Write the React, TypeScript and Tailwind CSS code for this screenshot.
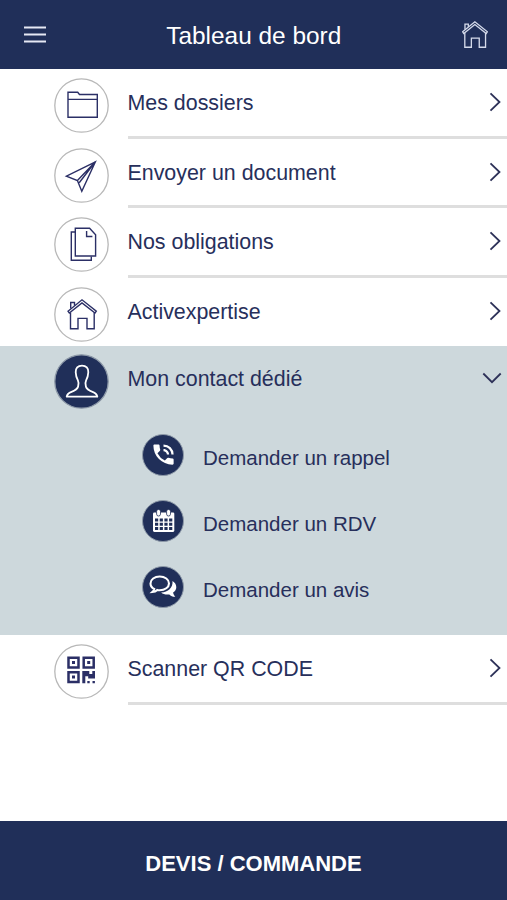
import type { ReactNode } from "react";
import { MdPhoneInTalk } from "react-icons/md";
import { clsx } from "clsx";

const HousePaths = () => (
  <>
    <path d="M14 24.2 28 12.8l14.3 11.4-1.3 1.9L28 15.9 15.3 26.1z" />
    <path d="M16.7 21.6v-6.1h3.8v3" />
    <path d="M16.5 25.5v16.3H24V31.4h9v10.4h7.2V25.5" />
  </>
);

const FolderIcon = () => (
  <path d="M14 39.3v-25h9.7l1.8 2.2h17.8v22.8zM14 21.4h29.3" />
);

const PlaneIcon = () => (
  <path d="M41.4 13.8 12.4 28.2l11 4.3 4.4 10.700zM23.4 32.5l18-18.7L25.2 34.8" />
);

const DocumentsIcon = () => (
  <>
    <path d="M21.3 11.3H35.6l6 6.4V39H21.3z" />
    <path d="M32.6 14v5.5h5.8" />
    <path d="M21.100 15h-3.8v28.3h20V39.5" />
  </>
);

const PersonIcon = () => (
  <path
    strokeWidth="1.8"
    strokeLinejoin="round"
    d="M28 11.6c-4.200 0-6.500 2.700-6.300 6.700.1 3.600 1.100 6 2.200 8.100.7 1.500.9 4.300.2 6.200-.8 2.400-3.400 4-6.600 5.200-2.700 1-4.400 2.100-4.800 4.900h30.600c-.4-2.800-2.100-3.900-4.800-4.900-3.200-1.200-5.800-2.800-6.600-5.200-.7-1.900-.5-4.700.2-6.200 1.100-2.100 2.100-4.500 2.200-8.100.2-4-2.100-6.700-6.300-6.700z"
  />
);

const QrIcon = () => (
  <>
    <path
      strokeWidth="2.5"
      d="M14.5 13.8h10v9.6h-10zM29.700 13.8h10v9.600h-10zM14.5 28.3h10v9.700h-10z"
    />
    <g fill="currentColor" stroke="none">
      <path d="M18 17.100h3v3h-3zM33.200 17.100h3v3h-3zM18 31.600h3v3h-3z" />
      <path d="M28.300 27.100h7v3h3v-3h2.700v7.500h-6.800v-2.300h-2.900v7h-3z" />
      <path d="M33.300 36.900h2.400v2.400h-2.400zM38.500 36.900h2.400v2.400h-2.400z" />
    </g>
  </>
);

const CalendarIcon = () => (
  <svg viewBox="0 0 42 42" className="size-[42px] shrink-0" fill="none">
    <rect x="11" y="12.4" width="21.3" height="19.5" rx="1.3" fill="#fff" />
    <path
      d="M13 18.5h3.200v3H13zM17.700 18.5h3.200v3h-3.200zM22.400 18.5h3.200v3h-3.200zM27.100 18.5h3.200v3h-3.200zM13 22.8h3.200v3H13zM17.700 22.8h3.200v3h-3.200zM22.400 22.8h3.200v3h-3.200zM27.100 22.8h3.200v3h-3.200zM13 27.1h3.200v3H13zM17.700 27.1h3.200v3h-3.200zM22.400 27.1h3.200v3h-3.200zM27.100 27.1h3.200v3h-3.200z"
      fill="#202f59"
    />
    <g fill="#fff" stroke="#202f59" strokeWidth=".8">
      <rect x="14.6" y="9.4" width="3.9" height="6.6" rx="1.9" />
      <rect x="24.6" y="9.4" width="3.9" height="6.6" rx="1.9" />
    </g>
  </svg>
);

const ChatIcon = () => (
  <svg viewBox="0 0 42 42" className="size-[42px] shrink-0" fill="none">
    <path
      d="M30.500 15.100c2.300 1.300 3.800 3.600 3.800 6.200 0 2.100-1.200 3.900-3.200 5.300.3 1.600 1 2.900 2.200 4.200-2.400.1-4.500-.8-6-2.400-3 .5-6.200-.1-8.200-1.900 6.800.1 12-4.500 11.400-11.400z"
      fill="#fff"
    />
    <path
      d="M17.700 10.500c-5.200 0-9.200 3-9.200 6.900 0 2.300 1.400 4.300 3.700 5.500-.3 1.200-.9 2.200-1.900 3.100 2.100-.1 3.800-.8 5-2 .8.200 1.600.2 2.400.2 5.200 0 9.300-3 9.300-6.800s-4.100-6.900-9.300-6.900z"
      stroke="#fff"
      strokeWidth="2.1"
    />
  </svg>
);

interface Entry {
  label: string;
  icon: ReactNode;
}

const ENTRIES: Entry[] = [
  { label: "Mes dossiers", icon: <FolderIcon /> },
  { label: "Envoyer un document", icon: <PlaneIcon /> },
  { label: "Nos obligations", icon: <DocumentsIcon /> },
  { label: "Activexpertise", icon: <HousePaths /> },
];

const CONTACT_ACTIONS: Entry[] = [
  {
    label: "Demander un rappel",
    icon: <MdPhoneInTalk className="size-[27px]" />,
  },
  { label: "Demander un RDV", icon: <CalendarIcon /> },
  { label: "Demander un avis", icon: <ChatIcon /> },
];

const RoundIcon = ({
  children,
  filled,
}: {
  children: ReactNode;
  filled?: boolean;
}) => (
  <svg
    viewBox="0 0 55 55"
    className={clsx(
      "size-[55px] shrink-0",
      filled ? "text-white" : "text-[#2b2f66]"
    )}
    fill="none"
    stroke="currentColor"
    strokeWidth="1.4"
  >
    <circle
      cx="27.5"
      cy="27.5"
      r="26.7"
      fill={filled ? "#202f59" : "#fff"}
      stroke={filled ? "#8d99a8" : "#b8b8b8"}
      strokeWidth="1.3"
    />
    {children}
  </svg>
);

const Chevron = ({ down }: { down?: boolean }) => (
  <svg
    viewBox="0 0 20 20"
    className={clsx("size-5 shrink-0", down ? "mr-[5px]" : "mr-px")}
    fill="none"
    stroke="#2d3158"
    strokeWidth="1.8"
  >
    <path d={down ? "m1.300 4.500 8.700 8.700 8.700-8.700" : "m4.500 1.300 9 8.700-9 8.700"} />
  </svg>
);

const MenuRow = ({
  label,
  icon,
  divider = true,
}: Entry & { divider?: boolean }) => (
  <button className="flex h-[69.6px] w-full items-start pl-[54px] text-left">
    <span className="mt-[9px]">
      <RoundIcon>{icon}</RoundIcon>
    </span>
    <span
      className={clsx(
        "ml-[18.5px] flex h-full flex-1 items-center justify-between",
        divider ? "border-b-[3px] border-[#dedede]" : "pb-[3px]"
      )}
    >
      <span className="pt-0.5">{label}</span>
      <Chevron />
    </span>
  </button>
);

export default function App() {
  return (
    <div className="flex h-[900px] w-full flex-col bg-white font-['Liberation_Sans',Arial,sans-serif] text-[21.4px] leading-6 text-[#272f5b]">
      <header className="flex h-[69px] shrink-0 items-center justify-between bg-[#202f59] pr-[19px] pl-[23.5px] text-white">
        <svg
          viewBox="0 0 22 17"
          className="h-[17px] w-[22px]"
          stroke="#e6e9f5"
          strokeWidth="2"
        >
          <path d="M0 1.500h22M0 8.500h22M0 15.500h22" />
        </svg>
        <h1 className="mt-0.5 text-[24.4px]">Tableau de bord</h1>
        <svg
          viewBox="13.3 12 29.7 30.5"
          className="h-[27px] w-[26px]"
          fill="none"
          stroke="#d5dbeb"
          strokeWidth="1.5"
        >
          <HousePaths />
        </svg>
      </header>

      <nav className="flex-1">
        {ENTRIES.map((entry, i) => (
          <MenuRow
            key={entry.label}
            {...entry}
            divider={i < ENTRIES.length - 1}
          />
        ))}

        <section className="-mt-[1.4px] h-[289px] bg-[#cdd8dc]">
          <button className="flex h-[70px] w-full items-start pt-2 pl-[54px] text-left">
            <RoundIcon filled>
              <PersonIcon />
            </RoundIcon>
            <span className="ml-[18.5px] flex h-[50px] flex-1 items-center justify-between">
              <span>Mon contact dédié</span>
              <Chevron down />
            </span>
          </button>
          <ul className="flex flex-col gap-6 pt-[18px] pl-[142px] text-[20.5px]">
            {CONTACT_ACTIONS.map(({ label, icon }) => (
              <li key={label} className="flex h-[42px] items-center">
                <span className="flex size-[42px] shrink-0 items-center justify-center rounded-full border border-[#8d99a8] bg-[#202f59] text-white">
                  {icon}
                </span>
                <span className="mt-1.5 ml-[19px]">{label}</span>
              </li>
            ))}
          </ul>
        </section>

        <MenuRow label="Scanner QR CODE" icon={<QrIcon />} />
      </nav>

      <button className="flex h-[79px] shrink-0 items-center justify-center bg-[#202f59] pt-1.5 text-[22px] font-bold text-white">
        DEVIS / COMMANDE
      </button>
    </div>
  );
}
